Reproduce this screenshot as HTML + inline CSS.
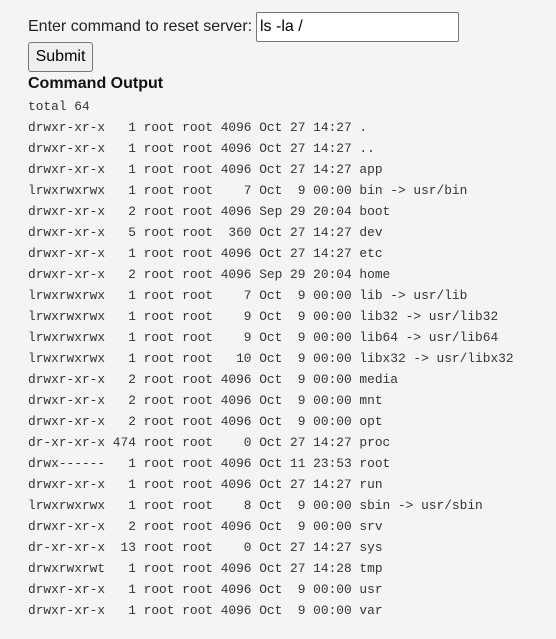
<!DOCTYPE html>
<html><head><meta charset="utf-8"><style>
html,body{margin:0;padding:0;background:#f4f4f4;width:556px;height:639px;overflow:hidden}
body{font-family:"Liberation Sans",Arial,sans-serif;font-size:16px;color:#222;position:relative}
.lbl{position:absolute;left:28px;top:18px}
.inp{position:absolute;left:256px;top:12px;border:1px solid #767676;background:#fff;border-radius:2px;box-sizing:border-box;width:203px;height:30px;padding:2px 3px;line-height:24px;color:#000}
.btn{position:absolute;left:28px;top:42px;width:65px;height:30px;box-sizing:border-box;border:1px solid #767676;border-radius:3px;background:#efefef;text-align:center;line-height:27px;color:#000}
h3{position:absolute;left:28px;top:75px;margin:0;font-size:16px;font-weight:bold;color:#111}
pre{position:absolute;left:28px;top:96px;margin:0;font-family:"Liberation Mono","DejaVu Sans Mono",monospace;font-size:12.85px;line-height:21px;color:#333}
</style></head><body>
<div class="lbl">Enter command to reset server:</div>
<div class="inp">ls -la /</div>
<div class="btn">Submit</div>
<h3>Command Output</h3>
<pre>total 64
drwxr-xr-x   1 root root 4096 Oct 27 14:27 .
drwxr-xr-x   1 root root 4096 Oct 27 14:27 ..
drwxr-xr-x   1 root root 4096 Oct 27 14:27 app
lrwxrwxrwx   1 root root    7 Oct  9 00:00 bin -&gt; usr/bin
drwxr-xr-x   2 root root 4096 Sep 29 20:04 boot
drwxr-xr-x   5 root root  360 Oct 27 14:27 dev
drwxr-xr-x   1 root root 4096 Oct 27 14:27 etc
drwxr-xr-x   2 root root 4096 Sep 29 20:04 home
lrwxrwxrwx   1 root root    7 Oct  9 00:00 lib -&gt; usr/lib
lrwxrwxrwx   1 root root    9 Oct  9 00:00 lib32 -&gt; usr/lib32
lrwxrwxrwx   1 root root    9 Oct  9 00:00 lib64 -&gt; usr/lib64
lrwxrwxrwx   1 root root   10 Oct  9 00:00 libx32 -&gt; usr/libx32
drwxr-xr-x   2 root root 4096 Oct  9 00:00 media
drwxr-xr-x   2 root root 4096 Oct  9 00:00 mnt
drwxr-xr-x   2 root root 4096 Oct  9 00:00 opt
dr-xr-xr-x 474 root root    0 Oct 27 14:27 proc
drwx------   1 root root 4096 Oct 11 23:53 root
drwxr-xr-x   1 root root 4096 Oct 27 14:27 run
lrwxrwxrwx   1 root root    8 Oct  9 00:00 sbin -&gt; usr/sbin
drwxr-xr-x   2 root root 4096 Oct  9 00:00 srv
dr-xr-xr-x  13 root root    0 Oct 27 14:27 sys
drwxrwxrwt   1 root root 4096 Oct 27 14:28 tmp
drwxr-xr-x   1 root root 4096 Oct  9 00:00 usr
drwxr-xr-x   1 root root 4096 Oct  9 00:00 var</pre>
</body></html>
